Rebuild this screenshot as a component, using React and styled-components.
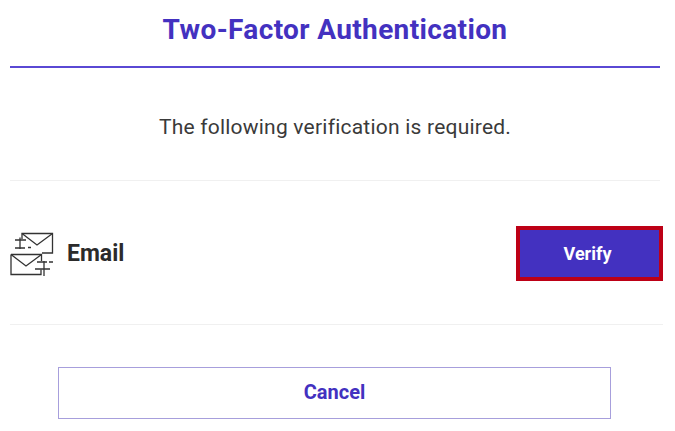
import React from 'react';
import styled, { createGlobalStyle } from 'styled-components';

const GlobalStyle = createGlobalStyle`
  html, body {
    margin: 0;
    padding: 0;
    background: #fff;
    font-family: Roboto, "Liberation Sans", sans-serif;
  }
`;

const Page = styled.div`
  width: 675px;
  height: 431px;
  box-sizing: border-box;
  padding: 0 15px 0 10px;
  overflow: hidden;
`;

const Title = styled.h1`
  margin: 0;
  height: 68px;
  box-sizing: border-box;
  padding: 12px 0 0;
  border-bottom: 2px solid #5a48d4;
  color: #4331c0;
  font-size: 28px;
  line-height: 35px;
  letter-spacing: 0.36px;
  font-weight: 700;
  text-align: center;
`;

const Message = styled.p`
  margin: 0;
  height: 113px;
  box-sizing: border-box;
  padding-top: 46px;
  border-bottom: 1px solid #f0f0f0;
  color: #3a3a3a;
  font-size: 21px;
  line-height: 26px;
  letter-spacing: 0.22px;
  text-align: center;
`;

const MethodRow = styled.div`
  height: 144px;
  box-sizing: border-box;
  display: flex;
  align-items: center;
  justify-content: space-between;
  margin-right: -3px;
  padding-top: 1px;
  border-bottom: 1px solid #f0f0f0;
`;

const Method = styled.div`
  display: flex;
  align-items: center;
  gap: 12px;
  color: #2b2b2b;
  font-size: 23px;
  font-weight: 700;
`;

const VerifyButton = styled.button`
  width: 147px;
  height: 55px;
  box-sizing: border-box;
  padding: 0 4px 0 0;
  border: 4px solid #bd0016;
  background: #4331c0;
  color: #fff;
  font-family: inherit;
  font-size: 18px;
  font-weight: 700;
`;

const CancelRow = styled.div`
  display: flex;
  justify-content: center;
  padding: 42px 1px 0 0;
`;

const CancelButton = styled.button`
  width: 553px;
  height: 52px;
  box-sizing: border-box;
  padding: 0 0 2px;
  border: 1.5px solid #a79fdc;
  background: #fff;
  color: #4331c0;
  font-family: inherit;
  font-size: 20px;
  font-weight: 700;
`;

const EmailIcon = () => (
  <svg width="45" height="46" viewBox="10 231 45 46" fill="none" stroke="#333" strokeWidth="1.3">
    <path d="M22 240V234.5H52.5V254H42" />
    <path d="M22 234.5L37 246L52.5 234.5" />
    <path d="M15 241H26M20 238.5V250M15 249H25M28 248.5H31" />
    <path d="M11 255.5H41.5V262M41 270.5V275.5H11V255.5" />
    <path d="M11 255.5L26 267L41.5 255.5" />
    <path d="M37 263H47M49 263H53M35 270H50M44 262V277" />
  </svg>
);

export default function App() {
  return (
    <Page>
      <GlobalStyle />
      <Title>Two-Factor Authentication</Title>
      <Message>The following verification is required.</Message>
      <MethodRow>
        <Method>
          <EmailIcon />
          Email
        </Method>
        <VerifyButton>Verify</VerifyButton>
      </MethodRow>
      <CancelRow>
        <CancelButton>Cancel</CancelButton>
      </CancelRow>
    </Page>
  );
}
